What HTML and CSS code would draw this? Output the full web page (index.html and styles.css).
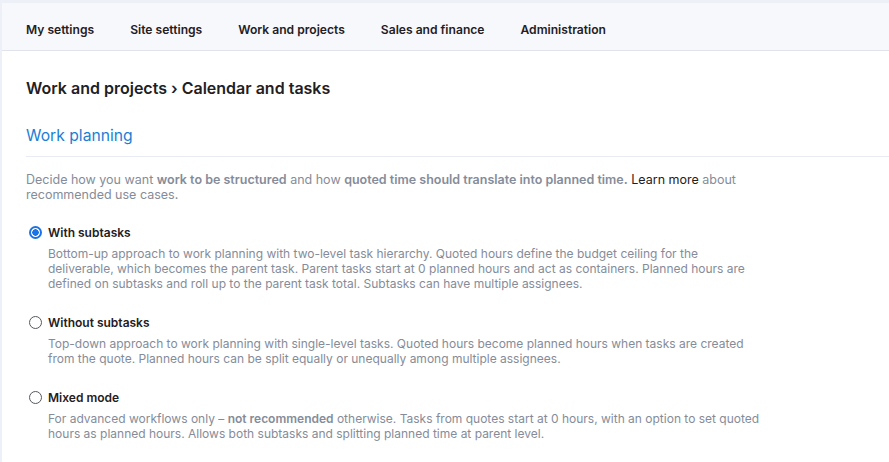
FILE: index.html
```html
<!DOCTYPE html>
<html lang="en">
<head>
  <meta charset="UTF-8" />
  <meta name="viewport" content="width=device-width, initial-scale=1.0"/>
  <title>Calendar and tasks</title>
  <link rel="stylesheet" href="styles.css">
</head>
<body>

  <div class="page">
    <nav class="top-nav">
      <a class="nav-item">My settings</a>
      <a class="nav-item">Site settings</a>
      <a class="nav-item">Work and projects</a>
      <a class="nav-item">Sales and finance</a>
      <a class="nav-item">Administration</a>
    </nav>

    <main class="content">
      <h1 class="crumbs">Work and projects › Calendar and tasks</h1>

      <section class="section">
        <h2 class="section-title">Work planning</h2>

        <p class="intro">Decide how you want <b>work to be structured</b> and how <b>quoted time should translate into planned time.</b> <a class="learn">Learn more</a> about recommended use cases.</p>

        <div class="options">
          <label class="option">
            <span class="radio checked"></span>
            <span class="option-body">
              <span class="option-name">With subtasks</span>
              <span class="option-desc">Bottom-up approach to work planning with two-level task hierarchy. Quoted hours define the budget ceiling for the deliverable, which becomes the parent task. Parent tasks start at 0 planned hours and act as containers. Planned hours are defined on subtasks and roll up to the parent task total. Subtasks can have multiple assignees.</span>
            </span>
          </label>

          <label class="option">
            <span class="radio"></span>
            <span class="option-body">
              <span class="option-name">Without subtasks</span>
              <span class="option-desc">Top-down approach to work planning with single-level tasks. Quoted hours become planned hours when tasks are created from the quote. Planned hours can be split equally or unequally among multiple assignees.</span>
            </span>
          </label>

          <label class="option">
            <span class="radio"></span>
            <span class="option-body">
              <span class="option-name">Mixed mode</span>
              <span class="option-desc">For advanced workflows only – <b>not recommended</b> otherwise. Tasks from quotes start at 0 hours, with an option to set quoted hours as planned hours. Allows both subtasks and splitting planned time at parent level.</span>
            </span>
          </label>
        </div>
      </section>
    </main>
  </div>

</body>
</html>
```

FILE: styles.css
```css
body {
  margin: 0;
  font-family: Inter, "Noto Sans", sans-serif;
  background: #eef0f7;
  color: #1f2023;
}

.page {
  margin: 3px 0 0 2px;
  min-height: 459px;
  background: #fff;
}

.top-nav {
  display: flex;
  height: 48px;
  box-sizing: border-box;
  align-items: center;
  padding: 6px 6px 0;
  background: #f7f8fc;
  border-bottom: 1px solid #e1e3ea;
}

.nav-item {
  padding: 0 18px;
  font-size: 12.1px;
  font-weight: 600;
  color: #1f2023;
  cursor: pointer;
}

.content {
  padding: 0 0 0 24px;
}

.crumbs {
  margin: 0;
  padding: 27px 0 0;
  font-size: 16px;
  font-weight: 600;
  line-height: 20px;
  color: #1f2023;
}

.section-title {
  margin: 0;
  padding: 28px 0 10px;
  font-size: 15.7px;
  font-weight: 400;
  line-height: 20px;
  color: #1b7ed4;
  border-bottom: 1px solid #e8eaf6;
}

.intro {
  margin: 15px 0 0;
  max-width: 742px;
  font-size: 12.5px;
  line-height: 15px;
  color: #858c99;
}

.intro b,
.option-desc b {
  font-weight: 600;
}

.learn {
  color: #1f2023;
  cursor: pointer;
}

.options {
  display: flex;
  flex-direction: column;
  gap: 24px;
  margin-top: 23px;
  padding-left: 3px;
}

.option {
  display: flex;
  gap: 6px;
  cursor: pointer;
}

.radio {
  flex: none;
  box-sizing: border-box;
  width: 13px;
  height: 13px;
  margin-top: 1px;
  border: 1px solid #55585f;
  border-radius: 50%;
  background: #fff;
}

.radio.checked {
  border: 2px solid #1a73e8;
  background: radial-gradient(circle, #1a73e8 0 3px, #fff 3.5px);
}

.option-body {
  display: flex;
  flex-direction: column;
  max-width: 713px;
}

.option-name {
  font-size: 12px;
  font-weight: 600;
  line-height: 15px;
  color: #1f2023;
}

.option-desc {
  margin-top: 6px;
  font-size: 12px;
  line-height: 15px;
  color: #858c99;
}
```
